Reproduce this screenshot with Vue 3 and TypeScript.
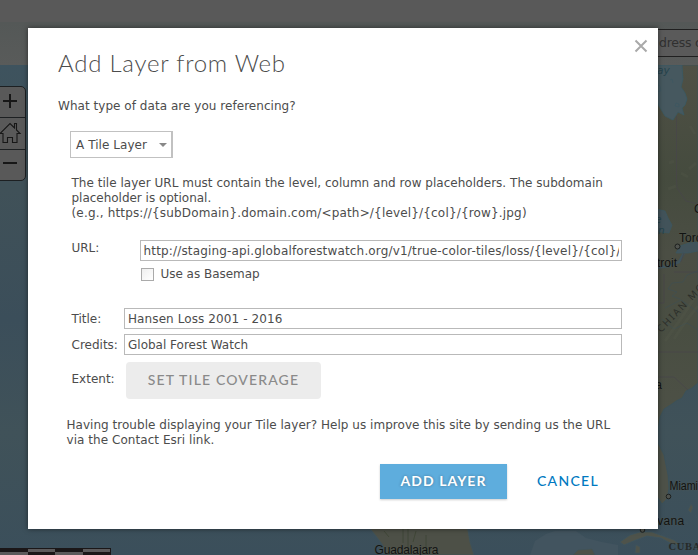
<script setup lang="ts">
import { ref } from 'vue'

const url = ref('http://staging-api.globalforestwatch.org/v1/true-color-tiles/loss/{level}/{col}/{row}')
const title = ref('Hansen Loss 2001 - 2016')
const credits = ref('Global Forest Watch')
const basemap = ref(false)
</script>

<template>
  <div class="app">
    <header class="topbar"></header>
    <div class="toolbar"><div class="search">dress or</div></div>
    <main class="map">
      <svg class="tiles" width="698" height="490" viewBox="0 65 698 490">
        <defs>
          <linearGradient id="sea" x1="0" y1="0" x2="0" y2="1">
            <stop offset="0" stop-color="#3e535e" />
            <stop offset="0.25" stop-color="#405158" />
            <stop offset="0.52" stop-color="#3b4e5a" />
            <stop offset="0.75" stop-color="#405259" />
            <stop offset="1" stop-color="#3b4f5b" />
          </linearGradient>
          <linearGradient id="land" x1="0" y1="0" x2="0" y2="1">
            <stop offset="0" stop-color="#4f5045" />
            <stop offset="0.3" stop-color="#454b3e" />
            <stop offset="0.5" stop-color="#4b4e44" />
            <stop offset="0.7" stop-color="#494e42" />
            <stop offset="1" stop-color="#4e5147" />
          </linearGradient>
        </defs>
        <rect x="0" y="65" width="698" height="490" fill="url(#sea)" />
        <path d="M640 65H698V383L692 388 686 391 682 398 676 401 672 404 664 409 660 417 658 430 640 440Z" fill="url(#land)" stroke="#38515b" stroke-width=".7" />
        <path d="M656 65H682L683 79 681 87 685 93 687 99 685 105 682 108 684 115 678 112 673 120 665 116 659 106 656 98Z" fill="#46585f" stroke="#385a66" stroke-width=".7" />
        <path d="M670 80l2-1 1 4M675 106l1-3 3 1v3zM655 83l5 3 1 5-5 1" fill="none" stroke="#3c5861" stroke-width=".7" />
        <path d="M656 209L665 211 668 218 672 225 669 233 660 232 656 230ZM676 253L680 246 689 243 698 242V251L688 253Z" fill="#42535a" stroke="#3a5761" stroke-width=".7" />
        <path d="M656 268L669 266 679 262 684 253" fill="none" stroke="#3f535b" stroke-width="2.500" />
        <path d="M676.500 116V180L677 188 686 201 698 204M684 253L681 262M658 352H698M658 377H674L688 390M674 272H698M664 274V303H658" fill="none" stroke="#48454b" stroke-width=".7" />
        <path d="M698 271L687 275 683 282 672 283 668 289 677 292 672 296 680 299M662 319L674 329 687 323 698 330M665 308L681 300 698 312" fill="none" stroke="#3d4f56" stroke-width="1" opacity=".55" />
        <path d="M674 339Q685 321 698 306M665 341Q683 317 698 292M669 163l5-2m7 12l7 4m2-51l5 8m-27 55l8-3m13-17l7-6" fill="none" stroke="#5c5d50" stroke-width="3" opacity=".2" />
        <path d="M658 443L664 455 668 475 669 488 667 499 662 504 656 495" fill="#4d5148" stroke="#38525d" stroke-width=".7" />
        <path d="M367 525L376 536 382 544 387 555H474L470 542 467 525Z" fill="#4d5047" stroke="#3f535a" stroke-width=".8" />
        <path d="M384 531l5 6m14-9v15m5-14v22m8-20l-3 11m13-7v19" fill="none" stroke="#3b4331" stroke-width="1" opacity=".7" />
        <path d="M530 555L535 541 546 534 555 531H576L586 538 602 542 618 545V555Z" fill="#42545f" />
        <path d="M573 555L578 550 592 549 595 555Z" fill="#4e5147" stroke="#3f535a" stroke-width=".7" />
        <path d="M620 542L630 535 640 532 652 532 663 536 674 540 680 545 672 544 661 538 647 536 636 540 624 545Z" fill="#4e534b" stroke="#3c5560" stroke-width=".7" />
        <path d="M636 545l4 2v6h-5zM688 510l3-6 2 3-2 6zM683 520l5 4M695 515l3 5" fill="#4e534b" stroke="#41555b" stroke-width=".7" />
        <g class="place">
          <text x="694" y="213">Ottawa</text>
          <text x="679" y="242">Toronto</text>
          <text x="677" y="267" text-anchor="end">Detroit</text>
          <text x="662" y="389" text-anchor="end">Atlanta</text>
          <text x="669.500" y="490" textLength="28.500" lengthAdjust="spacingAndGlyphs">Miami</text>
          <text x="684.500" y="524.500" text-anchor="end" letter-spacing=".3">Havana</text>
          <text x="374.500" y="554" textLength="64">Guadalajara</text>
        </g>
        <text x="668.500" y="549.500" class="country">CUBA</text>
        <text x="657" y="74" class="water">ay</text>
        <text x="655" y="223" class="water">e</text>
        <text x="658" y="234" class="water">n</text>
        <text class="range" transform="translate(661 333) rotate(-46)">CHIAN MOUNTAINS</text>
        <g fill="#50534e" stroke="#1d201e" stroke-width="1">
          <circle cx="677.500" cy="246.500" r="2.500" /><circle cx="668.500" cy="496.500" r="2.300" /><circle cx="642.500" cy="530" r="2.300" />
        </g>
      </svg>
      <div class="zoomer">
        <button aria-label="Zoom in"><svg width="16" height="16"><path d="M1 8H15M8 1V15" stroke="#171717" stroke-width="2" /></svg></button>
        <button aria-label="Home"><svg width="24" height="24" viewBox="0 0 24 24"><path d="M2 12.500L12 2.500 16.500 7V2.500H18.500V9L22 12.500H19V21.500H14.500V16.500H9.500V21.500H5V12.500Z" fill="none" stroke="#171717" stroke-width="1.100" /></svg></button>
        <button aria-label="Zoom out"><svg width="16" height="16"><path d="M1 7H15" stroke="#171717" stroke-width="2" /></svg></button>
      </div>
      <div class="scale"><i></i><i></i><i></i><i></i></div>
    </main>

    <section class="dialog" role="dialog">
      <button class="close" aria-label="Close"><svg width="14" height="14"><path d="M1.500 1.500L12.500 12.500M12.500 1.500L1.500 12.500" stroke="#a9a9a9" stroke-width="2" /></svg></button>
      <h1>Add Layer from Web</h1>
      <p class="question">What type of data are you referencing?</p>
      <div class="select"><span>A Tile Layer</span><i></i></div>
      <div class="hint">
        <p class="line-intro">The tile layer URL must contain the level, column and row placeholders. The subdomain</p>
        <p class="line-optional">placeholder is optional.</p>
        <p class="line-example">(e.g., https://{subDomain}.domain.com/&lt;path&gt;/{level}/{col}/{row}.jpg)</p>
      </div>
      <div class="row url"><label>URL:</label><div class="field"><span>{{ url }}</span></div></div>
      <div class="check" @click="basemap = !basemap"><i></i><span>Use as Basemap</span></div>
      <div class="row title"><label>Title:</label><div class="field"><span>{{ title }}</span></div></div>
      <div class="row credits"><label>Credits:</label><div class="field"><span>{{ credits }}</span></div></div>
      <div class="row extent"><label>Extent:</label><button class="coverage"><span>SET TILE COVERAGE</span></button></div>
      <div class="help">
        <p>Having trouble displaying your Tile layer? Help us improve this site by sending us the URL</p>
        <p class="line-contact">via the Contact Esri link.</p>
      </div>
      <footer><button class="add"><span>ADD LAYER</span></button><button class="cancel"><span>CANCEL</span></button></footer>
    </section>
  </div>
</template>

<style>
body { overflow: hidden; }
</style>

<style scoped>
* { box-sizing: border-box; }
.app { position: relative; width: 698px; height: 555px; overflow: hidden; font: 12px/15px "DejaVu Sans", Verdana, sans-serif; color: #4c4c4c; }
p, h1 { margin: 0; }
button { font: inherit; border: 0; padding: 0; margin: 0; }
svg { display: block; }
.topbar { height: 22px; background: #595959; }
.toolbar { height: 43px; padding-top: 7px; display: flex; justify-content: flex-end; background: linear-gradient(#545857, #595b5a); }
.search { width: 56px; height: 28px; border: 1px solid #202020; border-right: 0; background: #5a5a5a; color: #303030; font-size: 12.5px; letter-spacing: -.25px; line-height: 26px; padding-left: 16px; white-space: nowrap; overflow: hidden; }
.map { position: relative; height: 490px; border-top: 1px solid #4b5154; }
.tiles { margin-top: -1px; }
.place { font: 12px "Liberation Sans", sans-serif; fill: #101211; stroke: #555850; stroke-width: .5px; paint-order: stroke; }
.country { font: bold 10.5px "Liberation Serif", serif; fill: #262a28; letter-spacing: .7px; }
.water { font: italic 10.5px "DejaVu Sans", sans-serif; fill: #25434c; }
.range { font: 10px "Noto Sans", sans-serif; fill: #2c2f2a; letter-spacing: 1.8px; }
.zoomer { position: absolute; left: -6px; top: 20px; width: 32px; height: 95px; border: 1px solid #1d2022; border-radius: 5px; background: #595959; display: flex; flex-direction: column; overflow: hidden; }
.zoomer button { flex: 1; display: flex; align-items: center; justify-content: center; background: none; border-bottom: 1px solid #1d2022; }
.zoomer button:first-child svg { margin-top: -2px; }
.zoomer button:last-child { border-bottom: 0; }
.zoomer button:last-child svg { margin-top: -1px; }
.scale { position: absolute; left: 0; bottom: 0; width: 111px; height: 7px; display: flex; border-top: 1px solid #1b1718; border-right: 1px solid #1b1718; }
.scale i { flex: 1; border-top: 3px solid #1b1718; border-bottom: 3px solid #5c5a5b; }
.scale i:nth-child(even) { border-top-color: #5c5a5b; border-bottom-color: #1b1718; }
.dialog { position: absolute; left: 28px; top: 28px; width: 630px; height: 501px; background: #fff; box-shadow: 0 0 5px rgba(0, 0, 0, .5); padding: 20px 36px 30px 30px; display: flex; flex-direction: column; }
.close { position: absolute; right: 10px; top: 11px; background: none; }
h1 { height: 29px; font: 300 24px/29px Lato, sans-serif; letter-spacing: .75px; color: #4c4c4c; white-space: nowrap; }
.question { margin-top: 22px; white-space: nowrap; letter-spacing: .04px; }
.select { width: 103px; height: 27px; margin: 17px 0 0 12px; border: 1px solid #c1c1c1; border-right-width: 2px; padding: 1px 4px 0 5px; display: flex; align-items: center; justify-content: space-between; white-space: nowrap; letter-spacing: .06px; }
.select i { border: 4.500px solid transparent; border-top: 4px solid #888; border-bottom: 0; }
.hint { margin: 18px 0 0 13.5px; white-space: nowrap; }
.line-intro { letter-spacing: .025px; }
.line-optional { letter-spacing: -.02px; }
.line-example { letter-spacing: .17px; }
.row { display: flex; padding-left: 13.500px; }
.row label { flex: none; white-space: nowrap; }
.field { flex: 1; height: 21px; border: 1px solid #b9b9b9; padding: 0 2px 0 3px; line-height: 20px; overflow: hidden; white-space: nowrap; }
.field span { display: block; overflow: hidden; }
.url { margin-top: 19px; }
.url label { width: 68.500px; padding-top: 1px; }
.url .field { letter-spacing: .165px; padding-left: 2.500px; }
.check { margin: 6px 0 0 83px; display: flex; align-items: center; gap: 6.500px; height: 15px; letter-spacing: -.03px; }
.check i { width: 13px; height: 13px; border: 1px solid #aaa; background: linear-gradient(135deg, #eee, #fff); }
.title { margin-top: 26px; }
.title .field { letter-spacing: .1px; }
.title, .credits { height: 21px; }
.row.title label, .credits label { width: 52.500px; line-height: 22px; }
.credits { margin-top: 5px; }
.extent { margin-top: 7px; height: 37px; }
.extent label { width: 54.500px; line-height: 35px; }
.coverage { width: 195px; height: 37px; border-radius: 4px; background: #ececec; color: #8a8a8a; font: 500 14px/36px Lato, sans-serif; letter-spacing: 1.15px; white-space: nowrap; }
.coverage span { display: block; height: 37px; }
.help { margin: 19px 0 0 8.500px; white-space: nowrap; letter-spacing: .03px; }
.line-contact { letter-spacing: .05px; }
footer { display: flex; justify-content: flex-end; margin-top: auto; white-space: nowrap; }
.add, .cancel { height: 35px; font: 500 14px/34px Lato, sans-serif; letter-spacing: 1.1px; }
.add { width: 127px; background: #5eaddd; color: #fff; font-weight: 700; box-shadow: 0 1px 2px rgba(0, 0, 0, .2); text-shadow: 0 0 3px rgba(0, 0, 0, .3); letter-spacing: 1.05px; }
.cancel { width: 115px; padding-left: 7px; background: none; color: #0079c1; letter-spacing: 1.3px; }
.add span, .cancel span { display: block; height: 35px; }
</style>
